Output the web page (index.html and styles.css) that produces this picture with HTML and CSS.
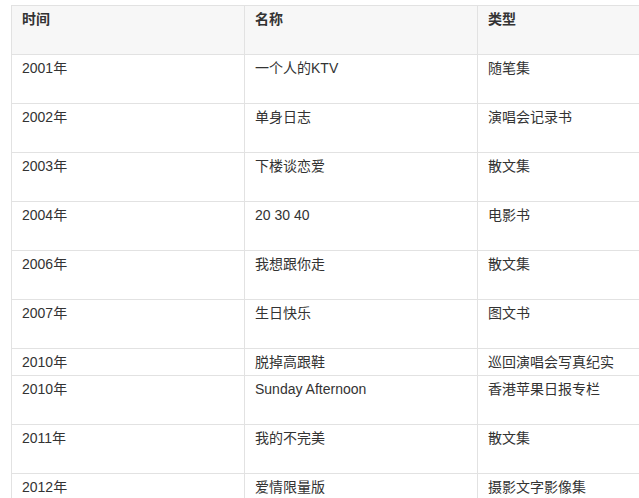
FILE: index.html
```
<!DOCTYPE html>
<html lang="zh-CN">
<head>
<meta charset="utf-8">
<title>作品</title>
<link rel="stylesheet" href="styles.css">
</head>
<body>
<table class="works">
  <thead>
    <tr class="tall"><th>时间</th><th>名称</th><th>类型</th></tr>
  </thead>
  <tbody>
    <tr class="tall"><td>2001年</td><td>一个人的KTV</td><td>随笔集</td></tr>
    <tr class="tall"><td>2002年</td><td>单身日志</td><td>演唱会记录书</td></tr>
    <tr class="tall"><td>2003年</td><td>下楼谈恋爱</td><td>散文集</td></tr>
    <tr class="tall"><td>2004年</td><td>20 30 40</td><td>电影书</td></tr>
    <tr class="tall"><td>2006年</td><td>我想跟你走</td><td>散文集</td></tr>
    <tr class="tall"><td>2007年</td><td>生日快乐</td><td>图文书</td></tr>
    <tr><td>2010年</td><td>脱掉高跟鞋</td><td>巡回演唱会写真纪实</td></tr>
    <tr class="tall"><td>2010年</td><td>Sunday Afternoon</td><td>香港苹果日报专栏</td></tr>
    <tr class="tall"><td>2011年</td><td>我的不完美</td><td>散文集</td></tr>
    <tr class="tall"><td>2012年</td><td>爱情限量版</td><td>摄影文字影像集</td></tr>
  </tbody>
</table>
</body>
</html>
```
FILE: styles.css
```
html, body {
  background: #ffffff;
}
body {
  margin: 5px 0 0 11px;
  font-family: "Liberation Sans", "Noto Sans CJK SC", sans-serif;
  font-size: 14px;
  color: #333333;
  overflow: hidden;
}
.works {
  border-collapse: separate;
  border-spacing: 0;
  table-layout: fixed;
  width: 700px;
  border-top: 1px solid #e2e2e2;
  border-left: 1px solid #e2e2e2;
}
.works th,
.works td {
  box-sizing: border-box;
  width: 233px;
  padding: 2px 10px 2px 10px;
  line-height: 22px;
  text-align: left;
  vertical-align: top;
  border-right: 1px solid #e2e2e2;
  border-bottom: 1px solid #e2e2e2;
  white-space: nowrap;
}
.works th {
  font-weight: bold;
  background: #f7f7f7;
}
.works tr.tall th,
.works tr.tall td {
  padding-bottom: 24px;
}
```
